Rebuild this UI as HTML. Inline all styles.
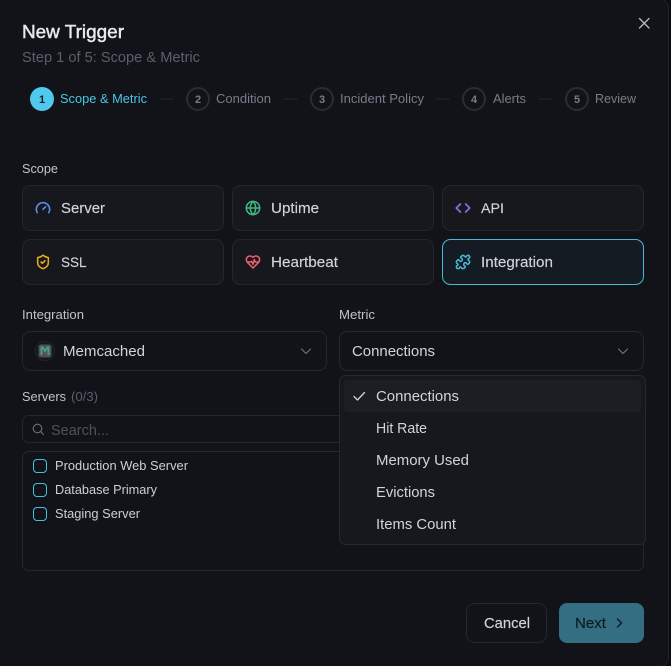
<!DOCTYPE html>
<html lang="en">
<head>
<meta charset="utf-8">
<title>New Trigger</title>
<style>
html,body{margin:0;padding:0;width:671px;height:666px;overflow:hidden;background:#0b0c0f}
svg{display:block}
text{font-family:"Liberation Sans",sans-serif;white-space:pre}
.i{fill:none;stroke-width:2.3;stroke-linecap:round;stroke-linejoin:round}
.s{fill:#777c89;font-size:12.5px}
.t{fill:#d2d4d9;font-size:14.7px}
.m{stroke:#d2d4d9;stroke-width:.15px}
.l{fill:#c0c3ca;font-size:12.5px}
.c{fill:#16181d;stroke:#24262c}
.b{fill:#111318;stroke:#25272d}
.n{fill:#777c89;font-size:11px;font-weight:700;text-anchor:middle}
</style>
</head>
<body>
<svg width="671" height="666" viewBox="0 0 671 666" xmlns="http://www.w3.org/2000/svg">
<rect x="-10" y="-1" width="678.5" height="668" rx="9" fill="#111318" stroke="#212329"/>

<text x="22" y="38" font-size="18.5" fill="#e8eaed" stroke="#e8eaed" stroke-width=".45" textLength="102" lengthAdjust="spacingAndGlyphs">New Trigger</text>
<text x="22" y="62" font-size="14.6" fill="#5a5f6d" textLength="178" lengthAdjust="spacingAndGlyphs">Step 1 of 5: Scope &amp; Metric</text>

<path d="M639.500 18.500l9.500 9.500M649 18.500l-9.500 9.500" stroke="#b8bac0" stroke-width="1.300" stroke-linecap="round" fill="none"/>

<circle cx="42" cy="99" r="12" fill="#4fc9ee"/>
<text x="42" y="103" font-size="11" font-weight="700" fill="#10202a" text-anchor="middle">1</text>
<text x="60" y="103" font-size="12.5" fill="#4cc3e6" textLength="87" lengthAdjust="spacingAndGlyphs">Scope &amp; Metric</text>
<path d="M159 99h15M283 99h15M436 99h14M538 99h15" stroke="#24262c" stroke-width="1"/>
<g fill="none" stroke="#2a2d34" stroke-width="2">
<circle cx="198" cy="99" r="11"/><circle cx="322" cy="99" r="11"/><circle cx="474" cy="99" r="11"/><circle cx="577" cy="99" r="11"/>
</g>
<text class="n" x="198" y="103">2</text><text class="n" x="322" y="103">3</text><text class="n" x="474" y="103">4</text><text class="n" x="577" y="103">5</text>
<text class="s" x="216" y="103" textLength="55" lengthAdjust="spacingAndGlyphs">Condition</text>
<text class="s" x="340" y="103" textLength="84" lengthAdjust="spacingAndGlyphs">Incident Policy</text>
<text class="s" x="493" y="103" textLength="33" lengthAdjust="spacingAndGlyphs">Alerts</text>
<text class="s" x="595" y="103" textLength="41" lengthAdjust="spacingAndGlyphs">Review</text>

<text class="l" x="22" y="173" textLength="36" lengthAdjust="spacingAndGlyphs">Scope</text>

<rect class="c" x="22.500" y="185.500" width="201" height="45" rx="8"/>
<rect class="c" x="232.500" y="185.500" width="201" height="45" rx="8"/>
<rect class="c" x="442.500" y="185.500" width="201" height="45" rx="8"/>
<rect class="c" x="22.500" y="239.500" width="201" height="45" rx="8"/>
<rect class="c" x="232.500" y="239.500" width="201" height="45" rx="8"/>
<rect x="442.500" y="239.500" width="201" height="45" rx="8" fill="#141b22" stroke="#48b8d8"/>

<text class="t m" x="61" y="213" textLength="44" lengthAdjust="spacingAndGlyphs">Server</text>
<text class="t m" x="271" y="213" textLength="48" lengthAdjust="spacingAndGlyphs">Uptime</text>
<text class="t m" x="481" y="213" style="font-size:14.2px" textLength="23" lengthAdjust="spacingAndGlyphs">API</text>
<text class="t m" x="61" y="267" style="font-size:14.2px" textLength="25.500" lengthAdjust="spacingAndGlyphs">SSL</text>
<text class="t m" x="271" y="267" textLength="67" lengthAdjust="spacingAndGlyphs">Heartbeat</text>
<text class="t m" x="481" y="267" textLength="72" lengthAdjust="spacingAndGlyphs">Integration</text>

<!-- gauge -->
<svg x="35" y="200" width="16" height="16" viewBox="0 0 24 24" class="i" stroke="#5b8fe8"><path d="m12 14 4-4"/><path d="M3.340 19a10 10 0 1 1 17.320 0"/></svg>
<!-- globe -->
<svg x="245" y="200" width="16" height="16" viewBox="0 0 24 24" class="i" stroke="#3fb883"><circle cx="12" cy="12" r="10"/><path d="M12 2a14.500 14.500 0 0 0 0 20 14.500 14.500 0 0 0 0-20"/><path d="M2 12h20"/></svg>
<!-- code -->
<svg x="455" y="200" width="16" height="16" viewBox="0 0 24 24" class="i" stroke="#8f6fe0" style="stroke-width:2.600"><path d="m16 18 6-6-6-6"/><path d="m8 6-6 6 6 6"/></svg>
<!-- shield check -->
<svg x="35" y="254" width="16" height="16" viewBox="0 0 24 24" class="i" stroke="#e8ad1f"><path d="M20 13c0 5-3.500 7.500-7.660 8.950a1 1 0 0 1-.670-.010C7.500 20.500 4 18 4 13V6a1 1 0 0 1 1-1c2 0 4.500-1.200 6.240-2.720a1.170 1.170 0 0 1 1.520 0C14.510 3.810 17 5 19 5a1 1 0 0 1 1 1z"/><path d="m9 12 2 2 4-4"/></svg>
<!-- heart pulse -->
<svg x="245" y="254" width="16" height="16" viewBox="0 0 24 24" class="i" stroke="#e8606f"><path d="M19 14c1.490-1.460 3-3.210 3-5.500A5.500 5.500 0 0 0 16.500 3c-1.760 0-3 .5-4.500 2-1.500-1.500-2.740-2-4.500-2A5.500 5.500 0 0 0 2 8.500c0 2.300 1.500 4.050 3 5.500l7 7Z"/><path d="M3.220 12H9.500l.5-1 2 4.500 2-7 1.500 3.500h5.270"/></svg>
<!-- puzzle -->
<svg x="455" y="254" width="16" height="16" viewBox="0 0 24 24" class="i" stroke="#48b8d8"><path d="M19.439 7.850c-.049.322.059.648.289.878l1.568 1.568c.47.470.706 1.087.706 1.704s-.235 1.233-.706 1.704l-1.611 1.611a.980.980 0 0 1-.837.276c-.470-.070-.802-.480-.968-.925a2.501 2.501 0 1 0-3.214 3.214c.446.166.855.497.925.968a.979.979 0 0 1-.276.837l-1.610 1.610a2.404 2.404 0 0 1-1.705.707 2.402 2.402 0 0 1-1.704-.706l-1.568-1.568a1.026 1.026 0 0 0-.877-.290c-.493.074-.840.504-1.020.968a2.500 2.500 0 1 1-3.237-3.237c.464-.180.894-.527.967-1.020a1.026 1.026 0 0 0-.289-.877l-1.568-1.568A2.402 2.402 0 0 1 1.998 12c0-.617.236-1.234.706-1.704L4.230 8.770c.240-.240.581-.353.917-.303.515.077.877.528 1.073 1.010a2.500 2.500 0 1 0 3.259-3.259c-.482-.196-.933-.558-1.010-1.073-.050-.336.062-.676.303-.917l1.525-1.525A2.402 2.402 0 0 1 12 1.998c.617 0 1.234.236 1.704.706l1.568 1.568c.230.230.556.338.877.290.493-.074.840-.504 1.020-.968a2.500 2.500 0 1 1 3.237 3.237c-.464.180-.894.527-.967 1.020Z"/></svg>

<text class="l" x="22" y="319" textLength="62" lengthAdjust="spacingAndGlyphs">Integration</text>
<text class="l" x="339" y="319" textLength="36" lengthAdjust="spacingAndGlyphs">Metric</text>

<rect class="b" x="22.500" y="331.500" width="304" height="39" rx="8"/>
<rect class="b" x="339.500" y="331.500" width="304" height="39" rx="8"/>

<circle cx="45" cy="351" r="9.700" fill="#15171b" stroke="#212329"/>
<rect x="38.500" y="344.500" width="13" height="13" rx="2.500" fill="#55504d"/>
<path d="M41.500 355v-7.500h1.200l2.300 3.500 2.300-3.500h1.200v7.500" fill="none" stroke="#3f9e93" stroke-width="2"/>
<text class="t" x="63" y="356" textLength="82" lengthAdjust="spacingAndGlyphs">Memcached</text>
<path d="M301.500 349l4.500 4.500 4.500-4.500M618.500 349l4.500 4.500 4.500-4.500" fill="none" stroke="#6d717c" stroke-width="1.200" stroke-linecap="round" stroke-linejoin="round"/>
<text class="t" x="352" y="356" textLength="83" lengthAdjust="spacingAndGlyphs">Connections</text>

<text class="l" x="22" y="401" textLength="44" lengthAdjust="spacingAndGlyphs">Servers</text>
<text x="71" y="401" font-size="12.500" fill="#5a5f6d" textLength="27" lengthAdjust="spacingAndGlyphs">(0/3)</text>

<rect class="b" x="22.500" y="415.500" width="621" height="27" rx="6"/>
<circle cx="37.500" cy="428.500" r="4.300" fill="none" stroke="#6d717c" stroke-width="1.100"/>
<path d="M41 432l2.500 2.500" stroke="#6d717c" stroke-width="1.100" stroke-linecap="round"/>
<text x="51" y="435" font-size="14.700" fill="#4e5260" textLength="58" lengthAdjust="spacingAndGlyphs">Search...</text>

<rect class="b" x="22.500" y="451.500" width="621" height="119" rx="6"/>
<g fill="#111318" stroke="#48bfe0">
<rect x="33.500" y="459.500" width="13" height="13" rx="3.500"/>
<rect x="33.500" y="483.500" width="13" height="13" rx="3.500"/>
<rect x="33.500" y="507.500" width="13" height="13" rx="3.500"/>
</g>
<g fill="#cccfd4" font-size="12.500">
<text x="55" y="470" textLength="133" lengthAdjust="spacingAndGlyphs">Production Web Server</text>
<text x="55" y="494" textLength="102" lengthAdjust="spacingAndGlyphs">Database Primary</text>
<text x="55" y="518" textLength="85" lengthAdjust="spacingAndGlyphs">Staging Server</text>
</g>

<rect x="339.500" y="375.500" width="306" height="169" rx="6" fill="#16181d" stroke="#26282e"/>
<rect x="344" y="380" width="297" height="32" rx="4" fill="#1c1e24"/>
<path d="M354 396.500l3.500 3.500 7-7.500" fill="none" stroke="#d2d4d9" stroke-width="1.300" stroke-linecap="round" stroke-linejoin="round"/>
<text class="t" x="376" y="401" textLength="83" lengthAdjust="spacingAndGlyphs">Connections</text>
<text class="t" x="376" y="433" textLength="51" lengthAdjust="spacingAndGlyphs">Hit Rate</text>
<text class="t" x="376" y="465" textLength="93" lengthAdjust="spacingAndGlyphs">Memory Used</text>
<text class="t" x="376" y="497" textLength="59" lengthAdjust="spacingAndGlyphs">Evictions</text>
<text class="t" x="376" y="529" textLength="80" lengthAdjust="spacingAndGlyphs">Items Count</text>

<rect class="b" x="466.500" y="603.500" width="80" height="39" rx="8"/>
<text class="t m" x="484" y="628" textLength="46" lengthAdjust="spacingAndGlyphs">Cancel</text>
<rect x="559" y="603" width="85" height="40" rx="8" fill="#336e82"/>
<text x="575" y="628" font-size="14.700" fill="#0e1a20" stroke="#0e1a20" stroke-width=".15" textLength="31" lengthAdjust="spacingAndGlyphs">Next</text>
<path d="M617.500 619l4 4-4 4" fill="none" stroke="#0e1a20" stroke-width="1.400" stroke-linecap="round" stroke-linejoin="round"/>
</svg>
</body>
</html>
